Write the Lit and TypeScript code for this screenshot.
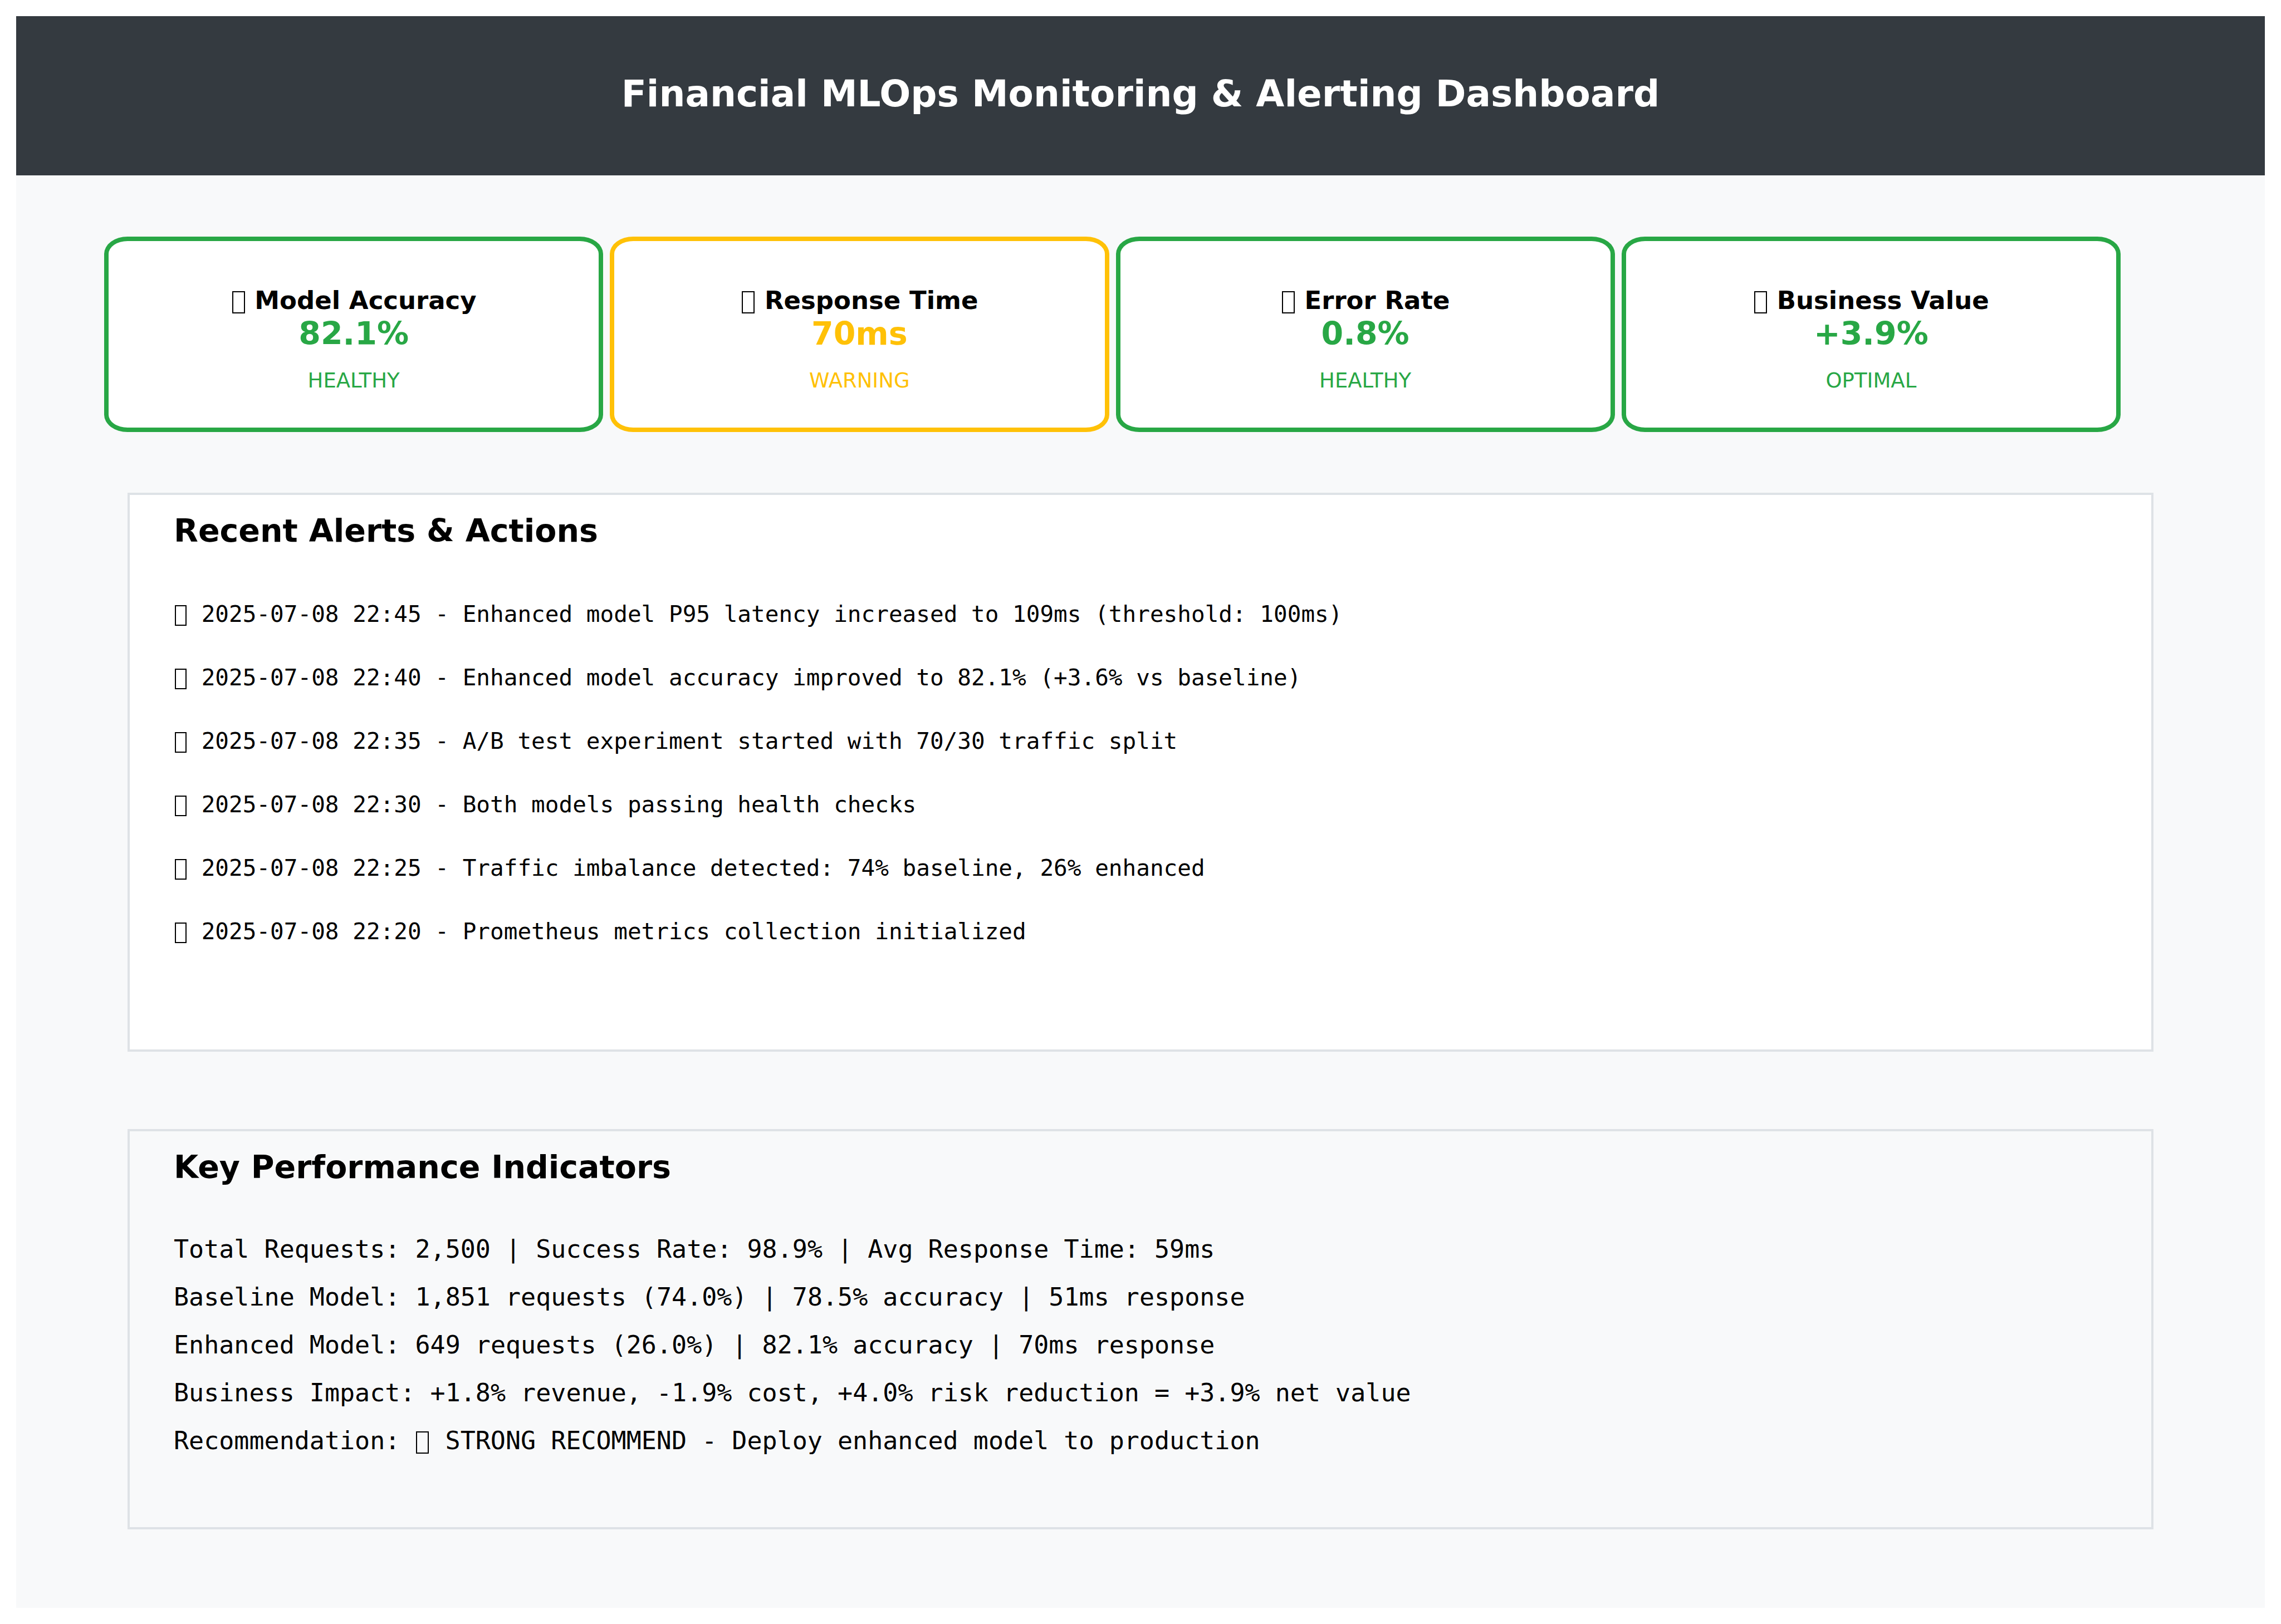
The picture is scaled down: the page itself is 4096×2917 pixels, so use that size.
import { LitElement, html, css } from "lit";
import { customElement, property } from "lit/decorators.js";

type Tone = "good" | "warn";

interface Metric {
  title: string;
  value: string;
  status: string;
  tone: Tone;
}

const METRICS: Metric[] = [
  { title: "Model Accuracy", value: "82.1%", status: "HEALTHY", tone: "good" },
  { title: "Response Time", value: "70ms", status: "WARNING", tone: "warn" },
  { title: "Error Rate", value: "0.8%", status: "HEALTHY", tone: "good" },
  { title: "Business Value", value: "+3.9%", status: "OPTIMAL", tone: "good" },
];

const ALERTS: string[] = [
  "2025-07-08 22:45 - Enhanced model P95 latency increased to 109ms (threshold: 100ms)",
  "2025-07-08 22:40 - Enhanced model accuracy improved to 82.1% (+3.6% vs baseline)",
  "2025-07-08 22:35 - A/B test experiment started with 70/30 traffic split",
  "2025-07-08 22:30 - Both models passing health checks",
  "2025-07-08 22:25 - Traffic imbalance detected: 74% baseline, 26% enhanced",
  "2025-07-08 22:20 - Prometheus metrics collection initialized",
];

const KPIS: string[] = [
  "Total Requests: 2,500 | Success Rate: 98.9% | Avg Response Time: 59ms",
  "Baseline Model: 1,851 requests (74.0%) | 78.5% accuracy | 51ms response",
  "Enhanced Model: 649 requests (26.0%) | 82.1% accuracy | 70ms response",
  "Business Impact: +1.8% revenue, -1.9% cost, +4.0% risk reduction = +3.9% net value",
];

/* Hollow upright box that stands in for an icon inside a line of text. */
const glyphStyles = css`
  .glyph {
    display: inline-block;
    box-sizing: border-box;
    width: 23px;
    height: 40px;
    margin: 0 2px;
    border: 2px solid #000;
    vertical-align: -8px;
  }
  .glyph.small {
    width: 21px;
    height: 37px;
    vertical-align: -7px;
  }
`;

@customElement("metric-card")
class MetricCard extends LitElement {
  @property({ attribute: false }) metric!: Metric;

  static styles = [
    glyphStyles,
    css`
      :host {
        display: block;
      }
      .card {
        border: 8px solid;
        border-radius: 42px / 31px;
        background: #fff;
        padding: 81px 16px 62px;
        text-align: center;
      }
      .good {
        color: #28a745;
      }
      .warn {
        color: #ffc107;
      }
      .title {
        margin: 0;
        color: #000;
        font-size: 45px;
        font-weight: 700;
        line-height: 52px;
      }
      .value {
        margin: 0 0 30px;
        font-size: 57px;
        font-weight: 700;
        line-height: 66px;
      }
      .status {
        margin: 0;
        font-size: 37px;
        line-height: 44px;
      }
    `,
  ];

  render() {
    const m = this.metric;
    return html`
      <article class="card ${m.tone}">
        <h2 class="title"><span class="glyph" aria-hidden="true"></span> ${m.title}</h2>
        <p class="value">${m.value}</p>
        <p class="status">${m.status}</p>
      </article>
    `;
  }
}

@customElement("app-root")
class AppRoot extends LitElement {
  static styles = [
    glyphStyles,
    css`
      :host {
        display: block;
        padding: 29px;
        background: #fff;
        color: #000;
        font-family: "DejaVu Sans", Verdana, sans-serif;
      }
      .page {
        background: #f8f9fa;
        padding-bottom: 141px;
      }
      .header {
        padding: 102px 40px 108px;
        background: #343a40;
        color: #fff;
        text-align: center;
      }
      .header-title {
        margin: 0;
        font-size: 66px;
        font-weight: 700;
        line-height: 76px;
      }
      .metrics {
        display: grid;
        grid-template-columns: repeat(4, minmax(0, 1fr));
        gap: 12px;
        padding: 110px 259px 109px 158px;
      }
      .panels {
        display: flex;
        flex-direction: column;
        gap: 139px;
        padding: 0 200px;
      }
      .panel {
        border: 4px solid #dee2e6;
        padding: 31px 79px 0;
      }
      .panel-title {
        margin: 0;
        font-size: 57px;
        font-weight: 700;
        line-height: 66px;
      }
      .alerts {
        background: #fff;
        padding-bottom: 155px;
      }
      .kpis {
        padding-bottom: 112px;
      }
      .list {
        margin: 0;
        padding: 0;
        list-style: none;
        font-family: "DejaVu Sans Mono", monospace;
      }
      .alert-list {
        margin-top: 60px;
        font-size: 41px;
        line-height: 114px;
      }
      .kpi-list {
        margin-top: 72px;
        font-size: 45px;
        line-height: 86px;
      }
    `,
  ];

  render() {
    return html`
      <main class="page">
        <header class="header">
          <h1 class="header-title">Financial MLOps Monitoring &amp; Alerting Dashboard</h1>
        </header>
        <section class="metrics" aria-label="Metrics">
          ${METRICS.map((m) => html`<metric-card .metric=${m}></metric-card>`)}
        </section>
        <div class="panels">
          <section class="panel alerts">
            <h2 class="panel-title">Recent Alerts &amp; Actions</h2>
            <ul class="list alert-list">
              ${ALERTS.map(
                (a) => html`<li><span class="glyph small" aria-hidden="true"></span> ${a}</li>`
              )}
            </ul>
          </section>
          <section class="panel kpis">
            <h2 class="panel-title">Key Performance Indicators</h2>
            <ul class="list kpi-list">
              ${KPIS.map((k) => html`<li>${k}</li>`)}
              <li>
                Recommendation: <span class="glyph" aria-hidden="true"></span> STRONG RECOMMEND -
                Deploy enhanced model to production
              </li>
            </ul>
          </section>
        </div>
      </main>
    `;
  }
}
